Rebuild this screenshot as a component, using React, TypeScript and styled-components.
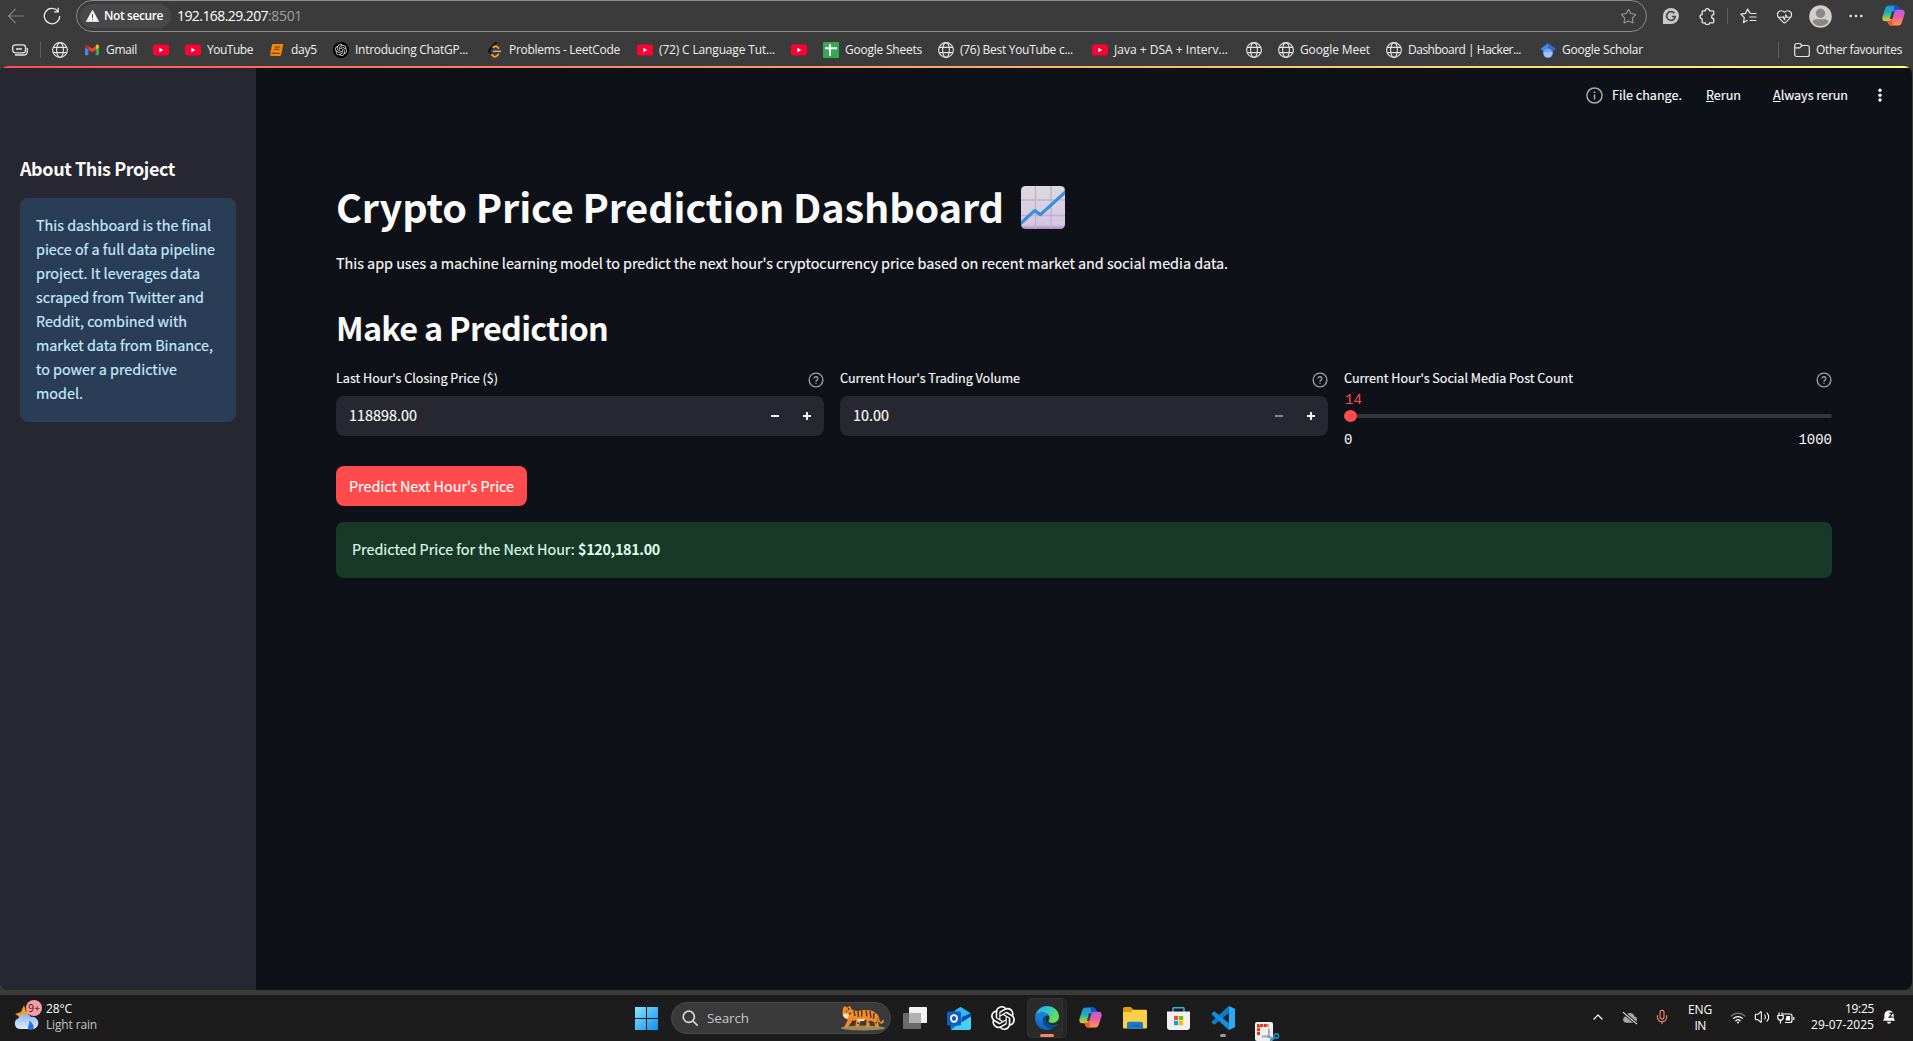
import React, { useLayoutEffect, useRef, useState } from "react";
import styled, { createGlobalStyle, css } from "styled-components";
import { Star, HeartPulse, Mic, Volume2, ChevronUp } from "lucide-react";
import { SiOpenai } from "react-icons/si";

const Global = createGlobalStyle`
  * { box-sizing: border-box; }
  html, body { margin: 0; background: #3b3b3b; overflow: hidden; }
  svg { display: block; flex: none; }
`;

const SYSTEM = `"Open Sans", "Noto Sans", sans-serif`;
const SOURCE = `"Noto Sans CJK JP", "Noto Sans CJK SC", sans-serif`;
const CODE = `"Liberation Mono", "DejaVu Sans Mono", monospace`;

const Page = styled.div`
  width: 1913px;
  height: 1041px;
  display: flex;
  flex-direction: column;
  background: #3b3b3b;
  overflow: hidden;
`;

const FitBox = styled.span<{ $w: number; $pad: number }>`
  display: block;
  flex: none;
  width: ${(p) => p.$w}px;
  margin-right: ${(p) => p.$pad}px;
  white-space: pre;
`;

/* Keeps a label at a given width by tracking its letters. */
function Fit({ w, pad = 0, children }: { w: number; pad?: number; children: React.ReactNode }) {
  const ref = useRef<HTMLSpanElement>(null);
  const [spacing, setSpacing] = useState(0);
  useLayoutEffect(() => {
    const el = ref.current;
    if (!el) return;
    const natural = el.getBoundingClientRect().width;
    const count = (el.textContent || "").length;
    if (count > 1) setSpacing((w - natural) / count);
  }, [w]);
  return (
    <FitBox $w={w} $pad={pad}>
      <span ref={ref} style={{ letterSpacing: `${spacing}px` }}>{children}</span>
    </FitBox>
  );
}

/* ---------- browser chrome ---------- */

const Toolbar = styled.header`
  height: 32px;
  flex: none;
  display: flex;
  align-items: flex-start;
  padding-left: 7px;
  color: #e8e8e8;
  font-family: ${SYSTEM};
`;

const Slot = styled.div<{ $w: number; $h?: number; $ml?: number; $mt?: number; $color?: string }>`
  flex: none;
  width: ${(p) => p.$w}px;
  height: ${(p) => p.$h ?? p.$w}px;
  margin-left: ${(p) => p.$ml ?? 0}px;
  margin-top: ${(p) => p.$mt ?? 0}px;
  color: ${(p) => p.$color ?? "inherit"};
`;

const AddressBar = styled.div`
  flex: none;
  width: 1571px;
  height: 32px;
  margin-left: 15px;
  border: 1px solid #8c8c8c;
  border-radius: 16px;
  display: flex;
  align-items: center;
  padding: 0 9px 0 3px;
`;

const Chip = styled.div`
  width: 91px;
  height: 24px;
  border-radius: 12px;
  background: #484848;
  display: flex;
  align-items: center;
  padding-left: 6px;
  gap: 5px;
  color: #fff;
  font-size: 12px;
  font-weight: 600;
  line-height: 24px;
`;

const Url = styled.div`
  display: flex;
  flex: 1;
  margin-left: 6px;
  font-size: 14px;
  line-height: 28px;
  color: #fff;
`;

const Port = styled.span`
  color: #a0a0a0;
`;

const Rule = styled.i<{ $ml: number; $h: number; $mt?: number }>`
  flex: none;
  width: 1px;
  height: ${(p) => p.$h}px;
  margin-left: ${(p) => p.$ml}px;
  margin-top: ${(p) => p.$mt ?? 0}px;
  background: #5f5f5f;
`;

const Bookmarks = styled.nav`
  height: 34px;
  flex: none;
  display: flex;
  align-items: center;
  padding: 2px 0 0 12px;
  color: #f0f0f0;
  font-family: ${SYSTEM};
  font-size: 12px;
  line-height: 16px;
`;

const BookmarkList = styled.div`
  display: flex;
  align-items: center;
  gap: 16px;
  margin-left: 11px;
  flex: 1;
`;

const Bookmark = styled.a`
  display: flex;
  align-items: center;
  gap: 6px;
  flex: none;
`;

/* ---------- streamlit app ---------- */

const Viewport = styled.div`
  height: 924px;
  width: 1912px;
  flex: none;
  display: flex;
  flex-direction: column;
  border-radius: 8px;
  overflow: hidden;
  background: #0e1117;
`;

const Decoration = styled.div`
  height: 2px;
  flex: none;
  background: linear-gradient(90deg, #ff4b4b, #ff5b50 5%, #fffd80);
`;

const Body = styled.div`
  flex: 1;
  display: flex;
  font-family: ${SOURCE};
  color: #fafafa;
  -webkit-text-stroke-width: 0.15px;
`;

const Sidebar = styled.aside`
  width: 256px;
  flex: none;
  background: #262730;
  padding: 88px 20px 0;
`;

const SideTitle = styled.h2`
  margin: 0;
  font-size: 18px;
  line-height: 24px;
  font-weight: 700;
  -webkit-text-stroke-width: 0;
`;

const InfoBox = styled.div`
  margin-top: 18px;
  height: 224px;
  border-radius: 8px;
  padding: 15px 16px;
  background: #2a3d57;
  color: #c7ebff;
  font-size: 14.4px;
  line-height: 24px;
`;

const Main = styled.main`
  flex: 1;
  display: flex;
  flex-direction: column;
`;

const AppHeader = styled.div`
  height: 56px;
  flex: none;
  display: flex;
  align-items: center;
  justify-content: flex-end;
  padding: 0 29px 2px 0;
  font-size: 12.6px;
  line-height: 20px;
`;

const HeaderText = styled.div<{ $ml: number }>`
  margin-left: ${(p) => p.$ml}px;
`;

const Content = styled.section`
  padding: 54px 80px 0;
  display: flex;
  flex-direction: column;
`;

const Title = styled.h1`
  margin: 0;
  display: flex;
  align-items: center;
  gap: 17px;
  height: 60px;
  font-size: 39.6px;
  line-height: 60px;
  font-weight: 700;
  -webkit-text-stroke-width: 0;
`;

const TitleText = styled.div`
  height: 60px;
  line-height: 55px;
`;

const Lead = styled.p`
  margin: 13px 0 0;
  font-size: 14.4px;
  line-height: 24px;
`;

const SubTitle = styled.h2`
  margin: 30px 0 0;
  font-size: 32.4px;
  line-height: 44px;
  height: 44px;
  font-weight: 700;
  -webkit-text-stroke-width: 0;
`;

const Columns = styled.div`
  margin-top: 18px;
  height: 96px;
  display: grid;
  grid-template-columns: repeat(3, 488px);
  gap: 16px;
`;

const LabelRow = styled.div`
  height: 29px;
  display: flex;
  justify-content: space-between;
  align-items: flex-start;
  font-size: 12.6px;
  line-height: 21px;
`;

const HelpMark = styled.div`
  padding-top: 5px;
  color: #a3a4a8;
`;

const NumberField = styled.div`
  height: 40px;
  border-radius: 8px;
  background: #262730;
  display: flex;
  align-items: center;
  padding: 0 1px 0 13px;
  font-size: 14.4px;
  line-height: 37px;
`;

const FieldValue = styled.div`
  flex: 1;
  height: 40px;
`;

const Step = styled.div<{ $dim?: boolean }>`
  width: 32px;
  display: flex;
  justify-content: center;
  color: ${(p) => (p.$dim ? "#84858b" : "#fafafa")};
`;

const Slider = styled.div`
  height: 67px;
  display: flex;
  flex-direction: column;
  font-family: ${CODE};
  font-size: 14px;
  -webkit-text-stroke-width: 0;
`;

const SliderValue = styled.div`
  height: 14px;
  margin-left: 1px;
  line-height: 9px;
  color: #ff4b4b;
`;

const Track = styled.div`
  height: 12px;
  display: flex;
  align-items: center;
`;

const Thumb = styled.i`
  width: 13px;
  height: 12px;
  border-radius: 50%;
  background: #ff4b4b;
`;

const Rail = styled.i`
  flex: 1;
  height: 4px;
  border-radius: 0 2px 2px 0;
  background: #333641;
`;

const Bounds = styled.div`
  margin-top: 8px;
  line-height: 20px;
  display: flex;
  justify-content: space-between;
`;

const Predict = styled.button`
  margin: 3px 0 0;
  width: 191px;
  height: 40px;
  border: 0;
  border-radius: 8px;
  background: #ff4b4b;
  color: #fff;
  font-family: ${SOURCE};
  font-size: 14.4px;
  line-height: 38px;
  padding: 0 13px 1px;
  text-align: left;
  -webkit-text-stroke-width: 0.15px;
`;

const Success = styled.div`
  margin-top: 16px;
  height: 56px;
  border-radius: 8px;
  padding: 0 16px;
  background: #183828;
  color: #dffde9;
  display: flex;
  font-size: 14.4px;
  line-height: 54px;
  b {
    font-weight: 700;
    -webkit-text-stroke-width: 0;
  }
`;

/* ---------- taskbar ---------- */

const Taskbar = styled.footer`
  margin-top: 5px;
  height: 46px;
  flex: none;
  display: flex;
  align-items: flex-start;
  background: #1c1c1c;
  color: #fff;
  font-family: ${SYSTEM};
  font-size: 12px;
  line-height: 16px;
`;

const WeatherIcon = styled.div`
  position: relative;
  width: 28px;
  height: 30px;
  margin: 5px 0 0 14px;
`;

const Badge = styled.span`
  position: absolute;
  left: 12px;
  top: 0;
  width: 16px;
  height: 16px;
  border-radius: 8px;
  background: #ff99a4;
  color: #1c1c1c;
  font-size: 10.5px;
  text-align: center;
`;

const Stack = styled.div<{ $w: number; $ml: number; $mt?: number; $align?: string }>`
  width: ${(p) => p.$w}px;
  flex: none;
  margin-left: ${(p) => p.$ml}px;
  margin-top: ${(p) => p.$mt ?? 7}px;
  display: flex;
  flex-direction: column;
  align-items: ${(p) => p.$align ?? "flex-start"};
`;

const Muted = styled.div`
  color: #c4c4c4;
`;

const SearchBox = styled.div`
  flex: none;
  width: 220px;
  height: 32px;
  margin: 7px 0 0 13px;
  border-radius: 16px;
  border: 1px solid #4a4a4a;
  background: #3a3a3a;
  display: flex;
  align-items: center;
  padding: 0 5px 1px 10px;
  gap: 9px;
  font-size: 13.5px;
  color: #c8c8c8;
`;

const Grow = styled.div`
  flex: 1;
`;

const tile = css`
  border: 1px solid #323232;
  border-radius: 5px;
  background: #2b2b2b;
`;

const ActiveTile = styled.div`
  ${tile}
  flex: none;
  width: 40px;
  height: 40px;
  margin: 3px 0 0 12px;
  background: #242424;
`;

const ActiveFace = styled.div`
  ${tile}
  width: 36px;
  height: 40px;
  margin: -1px 0 0 -1px;
  display: flex;
  flex-direction: column;
  align-items: center;
  justify-content: space-between;
  padding: 7px 0 0 4px;
`;

const Indicator = styled.i<{ $w: number; $c: string }>`
  width: ${(p) => p.$w}px;
  height: 3px;
  border-radius: 2px;
  background: ${(p) => p.$c};
`;

const RunningApp = styled.div`
  flex: none;
  width: 24px;
  height: 31px;
  margin: 11px 0 0 21px;
  display: flex;
  flex-direction: column;
  align-items: center;
  justify-content: space-between;
`;

/* ---------- drawings ---------- */

const Globe = () => (
  <svg width="16" height="16" viewBox="0 0 16 16" fill="none" stroke="#e6e6e6" strokeWidth="1.1">
    <circle cx="8" cy="8" r="7.4" />
    <ellipse cx="8" cy="8" rx="3.4" ry="7.4" />
    <path d="M1.2 5.4h13.6M1.2 10.6h13.6" />
  </svg>
);

const YouTube = () => (
  <svg width="16" height="16" viewBox="0 0 16 16">
    <rect y="2.4" width="16" height="11.2" rx="2.4" fill="#ff0033" />
    <path d="M6.3 5.7v4.6l4-2.3z" fill="#fff" />
  </svg>
);

const Gmail = () => (
  <svg width="16" height="16" viewBox="0 0 16 16">
    <path d="M1 4.5v7.8c0 .6.4 1 1 1h2.4V6.8z" fill="#4285f4" />
    <path d="M15 4.5v7.8c0 .6-.4 1-1 1h-2.4V6.8z" fill="#34a853" />
    <path d="M11.6 4.2v3.6L15 5.2V4c0-1.5-1.6-2-2.6-1.3z" fill="#fbbc04" />
    <path d="M4.4 7.8V3.9L8 6.6l3.6-2.7v3.9L8 10.5z" fill="#ea4335" />
    <path d="M1 4v1.2l3.4 2.6V3.9l-.8-.6C2.5 2.3 1 2.7 1 4z" fill="#c5221f" />
  </svg>
);

const Book = () => (
  <svg width="16" height="16" viewBox="0 0 16 16">
    <path d="M4.3 2h8.8c.9 0 1.2.5 1 1.2l-2 9.5c-.2.9-.7 1.3-1.6 1.3H2.6c-1.2 0-1.8-.7-1.5-1.9L3 3.1C3.2 2.4 3.5 2 4.3 2z" fill="#fb8500" />
    <path d="M5.7 5h5.2M5.2 7.3h5.2M2.4 11.3h8.3" stroke="#3b3b3b" strokeWidth="1" />
  </svg>
);

const Leet = () => (
  <svg width="16" height="16" viewBox="0 0 16 16" fill="none" strokeWidth="1.9">
    <path d="M9 .8 2.8 7.5c-.9 1-.9 2.200 0 3.100l1.700 1.800" stroke="#0c0c0c" strokeLinecap="round" />
    <path d="M6.300 5.200c1.400-1.200 3-1.200 4.200 0l1 1M4.800 12.700l1.200 1.200c1.100 1.100 2.700 1.100 3.800 0l1.600-1.500" stroke="#ffa116" strokeLinecap="round" />
    <path d="M6 9.300h8" stroke="#b3b3b3" strokeWidth="1.5" />
  </svg>
);

const Sheets = () => (
  <svg width="16" height="16" viewBox="0 0 16 16">
    <rect width="16" height="16" rx="1" fill="#34a853" />
    <path d="M2 6.3h12M7 2.2v11.6" stroke="#fff" strokeWidth="2" />
  </svg>
);

const Scholar = () => (
  <svg width="16" height="16" viewBox="0 0 16 16">
    <circle cx="8" cy="11" r="4.8" fill="#a0c3ff" />
    <path d="M8 1 .5 6.900 4 9.500h8l3.500-2.600z" fill="#4285f4" />
    <path d="m8 1 7.500 5.900L12 9.500 8 6z" fill="#356ac3" />
    <path d="M3.700 9.200a4.800 4.800 0 0 1 8.600 0z" fill="#76a7fa" />
  </svg>
);

const OpenAiBadge = styled.span`
  width: 16px;
  height: 16px;
  border-radius: 8px;
  background: #000;
  color: #ddd;
  display: grid;
  place-items: center;
`;

const Question = () => (
  <svg width="16" height="16" viewBox="0 0 24 24" fill="none" stroke="currentColor" strokeWidth="2" strokeLinecap="round">
    <circle cx="12" cy="12" r="10.3" />
    <path d="M9.1 9a3 3 0 0 1 5.8 1c0 2-2.900 2.500-2.900 4M12 17.200v.1" />
  </svg>
);

const ChartEmoji = () => (
  <svg width="44" height="44" viewBox="0 0 44 44">
    <defs>
      <linearGradient id="paper" x1="0" y1="0" x2="0" y2="1">
        <stop offset="0" stopColor="#dcd9e0" />
        <stop offset=".9" stopColor="#d6c6e4" />
        <stop offset="1" stopColor="#ad8cc4" />
      </linearGradient>
      <clipPath id="sheet"><rect width="44" height="43" rx="4.5" /></clipPath>
    </defs>
    <g clipPath="url(#sheet)">
      <rect width="44" height="43" fill="url(#paper)" />
      <path d="M14.500 0v43M30 0v43M0 14h44M0 29.500h44" stroke="#bdb4c6" strokeWidth="1.3" />
      <path d="M-1 38 13.600 24.600 19.500 28.600 45 5.500" fill="none" stroke="#3390dc" strokeWidth="3.2" strokeLinejoin="round" />
    </g>
  </svg>
);

const Copilot = ({ size }: { size: number }) => (
  <svg width={size} height={size} viewBox="0 0 24 24">
    <defs>
      <linearGradient id="cpA" x1="0" y1="0" x2="0" y2="1">
        <stop offset="0" stopColor="#1b8ae8" />
        <stop offset=".5" stopColor="#21b6b0" />
        <stop offset="1" stopColor="#f2c821" />
      </linearGradient>
      <linearGradient id="cpB" x1="0" y1="0" x2="0" y2="1">
        <stop offset="0" stopColor="#b05cf2" />
        <stop offset=".5" stopColor="#ef5f98" />
        <stop offset="1" stopColor="#ff9b4a" />
      </linearGradient>
    </defs>
    <path d="M7.500 1.500h7.200c1.700 0 2.400 1 2.900 2.600l.8 2.400h-2.200c-1.500 0-2.200.8-2.700 2.300l-2 6.400c-.6 2-1.500 2.700-3.200 2.700H3.500C.8 17.900-.2 16 .6 13L3.300 4.700C4 2.500 5.200 1.500 7.500 1.500z" fill="url(#cpA)" />
    <path d="M12.500 1.500h2.200c1.700 0 2.400 1 2.900 2.600l.8 2.400h-2.200c-1.500 0-2.200.8-2.700 2.300l-.5 1.500z" fill="#1650c8" />
    <path d="M16.500 22.500H9.300c-1.700 0-2.400-1-2.900-2.600L5.600 17.500h2.200c1.500 0 2.200-.8 2.700-2.300l2-6.400c.6-2 1.500-2.700 3.200-2.700h4.800c2.700 0 3.700 1.900 2.900 4.900l-2.700 8.300c-.7 2.200-1.900 3.200-4.200 3.200z" fill="url(#cpB)" />
    <path d="M11.500 22.500H9.300c-1.700 0-2.400-1-2.900-2.600L5.600 17.500h2.200c1.500 0 2.200-.8 2.700-2.300z" fill="#f0592e" />
    <path d="M10.400 7.500h2.700l-2.300 8.200H8.200z" fill="#3b3b3b" />
  </svg>
);

const Edge = () => (
  <svg width="24" height="24" viewBox="0 0 24 24">
    <defs>
      <linearGradient id="edA" x1="0" y1="0" x2="1" y2=".5">
        <stop offset="0" stopColor="#2aa6e8" />
        <stop offset=".5" stopColor="#2cc3d2" />
        <stop offset="1" stopColor="#6be04f" />
      </linearGradient>
      <linearGradient id="edB" x1="0" y1="0" x2="0" y2="1">
        <stop offset="0" stopColor="#1a86dc" />
        <stop offset="1" stopColor="#0f62b8" />
      </linearGradient>
    </defs>
    <path d="M.2 10.500C1 4.300 6 0 12 0c7 0 12 5 12 10.600 0 4-3 6.300-6.500 6.300-2.600 0-4-.9-4-1.700 0-.7 1-1.200 1-3.200C14.500 8.800 11 6.500 7.500 6.500c-3.300 0-6 1.500-7.300 4z" fill="url(#edA)" />
    <path d="M.2 10.500C1.300 8 4.300 6.500 7.500 6.500c3 0 5 1.500 5.800 3C9.500 9.300 8 12 8 14.500c0 5 5 9 10.500 7-2 1.600-4.300 2.500-6.500 2.500C5 24-.7 18 .2 10.500z" fill="url(#edB)" />
    <path d="M8 14.500c0-2.400 1.400-4.700 3.500-5-.3 1-.8 1.500-.8 3.200 0 4 4 6.500 8 6.300 1.400-.1 2.500-.5 3.500-1 .4-.2.700.1.500.500-1 1.600-2.400 2.600-4.200 3C13 23.500 8 19.500 8 14.500z" fill="#0c4a94" />
  </svg>
);

const Tiger = () => (
  <svg width="45" height="26" viewBox="0 0 45 26">
    <ellipse cx="23" cy="23" rx="22" ry="2.5" fill="#998c5c" />
    <path d="M36 9c3 2 1.500 7 4.500 8.500 2 .8 3-.8 2-2.500" fill="none" stroke="#e8892a" strokeWidth="1.8" />
    <path d="M3 3l2-2 2 1.500L10 1l1.500 3C14 6.500 17 6 21 5.500c5-.8 11-.5 14 2 3 3 1.500 6 3 9l1 5.500h-3.500L34 17l-4-1.500-.5 6.500H26l.5-7-6 .5-1.500 6.500h-3.500l.5-7-4 1.500-4.500 6H4l4-8C5 14.500 2.500 12 2.500 8z" fill="#f08c2c" />
    <path d="M3 9c1.500-1 4-.5 6 .5l-1 4C5 13 3 12 3 9zM17 14l8 0-1 2-6 .3z" fill="#fbe3c0" />
    <path d="M14 6l1 5M18 6l.5 6M22 5.500l-.5 6M26 5.500l1 6M30 6l1 7M34 8l-.5 6M9 3l-1 2M11 8l-2 1M12 16l2 1M28 17h2M35 18l2-.5M6 6.500h1M17 18l2 .5" stroke="#3b2313" strokeWidth="1.2" />
  </svg>
);

const marks: { icon: React.ReactNode; text?: string; w?: number; pad?: number }[] = [
  { icon: <Globe /> },
  { icon: <Gmail />, text: "Gmail", w: 31 },
  { icon: <YouTube /> },
  { icon: <YouTube />, text: "YouTube", w: 46 },
  { icon: <Book />, text: "day5", w: 26 },
  { icon: <OpenAiBadge><SiOpenai size={12} /></OpenAiBadge>, text: "Introducing ChatGP...", w: 113, pad: 3 },
  { icon: <Leet />, text: "Problems - LeetCode", w: 111, pad: 1 },
  { icon: <YouTube />, text: "(72) C Language Tut...", w: 116 },
  { icon: <YouTube /> },
  { icon: <Sheets />, text: "Google Sheets", w: 77 },
  { icon: <Globe />, text: "(76) Best YouTube c...", w: 113, pad: 3 },
  { icon: <YouTube />, text: "Java + DSA + Interv...", w: 114, pad: 2 },
  { icon: <Globe /> },
  { icon: <Globe />, text: "Google Meet", w: 70 },
  { icon: <Globe />, text: "Dashboard | Hacker...", w: 113, pad: 3 },
  { icon: <Scholar />, text: "Google Scholar", w: 81 },
];

const about: [string, number][] = [
  ["This dashboard is the final", 175],
  ["piece of a full data pipeline", 179],
  ["project. It leverages data", 164],
  ["scraped from Twitter and", 168],
  ["Reddit, combined with", 151],
  ["market data from Binance,", 177],
  ["to power a predictive", 141],
  ["model.", 47],
];

function NumberInput({ label, w, value, vw, dim }: { label: string; w: number; value: string; vw: number; dim?: boolean }) {
  return (
    <div>
      <LabelRow>
        <Fit w={w}>{label}</Fit>
        <HelpMark><Question /></HelpMark>
      </LabelRow>
      <NumberField>
        <FieldValue><Fit w={vw}>{value}</Fit></FieldValue>
        <Step $dim={dim}><svg width="8" height="8"><path d="M0 4h8" stroke="currentColor" strokeWidth="2" /></svg></Step>
        <Step><svg width="8" height="8"><path d="M0 4h8M4 0v8" stroke="currentColor" strokeWidth="2" /></svg></Step>
      </NumberField>
    </div>
  );
}

export default function App() {
  return (
    <Page>
      <Global />
      <Toolbar>
        <Slot $w={18} $mt={7} $color="#808080">
          <svg width="18" height="18" viewBox="0 0 18 18" fill="none" stroke="currentColor" strokeWidth="1.2"><path d="M17 9H1.500M8.500 2 1.500 9l7 7" /></svg>
        </Slot>
        <Slot $w={18} $ml={18} $mt={7}>
          <svg width="18" height="18" viewBox="0 0 18 18" fill="none" stroke="currentColor" strokeWidth="1.3"><path d="M16.700 9A7.700 7.700 0 1 1 14.800 4M15.200.8v4h-4.200" /></svg>
        </Slot>
        <AddressBar>
          <Chip>
            <svg width="13" height="12" viewBox="0 0 13 12"><path d="M6.500.3 12.700 11.500H.3z" fill="#fff" stroke="#fff" strokeWidth=".6" strokeLinejoin="round" /><path d="M6.500 4.200v3.500M6.500 8.800v1.200" stroke="#484848" strokeWidth="1.2" /></svg>
            <Fit w={59}>Not secure</Fit>
          </Chip>
          <Url><Fit w={91}>192.168.29.207</Fit><Port><Fit w={34}>:8501</Fit></Port></Url>
          <Slot $w={17} $color="#9a9a9a"><Star size={17} strokeWidth={1.5} /></Slot>
        </AddressBar>
        <Slot $w={16} $ml={16} $mt={8}>
          <svg width="16" height="16" viewBox="0 0 16 16"><path d="M8 0a8 8 0 1 1 0 16H0V8a8 8 0 0 1 8-8z" fill="#c8c8c8" /><path d="M11.300 5.300A4.300 4.300 0 1 0 12.200 8.500H8.800" fill="none" stroke="#444" strokeWidth="1.7" /></svg>
        </Slot>
        <Slot $w={17} $ml={20} $mt={8}>
          <svg width="17" height="17" viewBox="0 0 17 17" fill="none" stroke="currentColor" strokeWidth="1.3" strokeLinejoin="round"><path d="M4 2.800h2.300a2.100 2.100 0 0 1 4.200 0h3.300c.5 0 .9.4.9.9v3a2 2 0 0 0 0 4v3.200c0 .5-.4.900-.9.900h-3.300a2.100 2.100 0 0 1-4.200 0H4a.9.9 0 0 1-.9-.9v-3a2.100 2.100 0 0 1 0-4.200v-3c0-.5.400-.9.900-.9z" /></svg>
        </Slot>
        <Rule $ml={11} $h={16} $mt={8} />
        <Slot $w={17} $h={16} $ml={12} $mt={8}>
          <svg width="17" height="16" viewBox="0 0 17 16" fill="none" stroke="currentColor" strokeWidth="1.2" strokeLinejoin="round"><path d="M10 5.400 7.600 1 5.600 5.400.8 6.100l3.500 3.500-.8 5 4.100-2.300M10.300 5.500H16.500M9.500 9H16.500M9.500 12.500H16.500" /></svg>
        </Slot>
        <Slot $w={17} $ml={19} $mt={8}><HeartPulse size={17} strokeWidth={1.6} /></Slot>
        <Slot $w={23} $ml={16} $mt={5}>
          <svg width="23" height="23" viewBox="0 0 23 23"><circle cx="11.5" cy="11.5" r="11.3" fill="#d1cecb" /><circle cx="11.5" cy="8.3" r="4.7" fill="#8b8883" /><path d="M3.500 17c.6-2 1.800-2.800 3.400-2.800h9.200c1.600 0 2.800.8 3.400 2.800-1.900 2.700-4.900 4.100-8 4.100s-6.100-1.400-8-4.100z" fill="#8b8883" /></svg>
        </Slot>
        <Slot $w={14} $h={4} $ml={17} $mt={14}>
          <svg width="14" height="4"><g fill="currentColor"><circle cx="1.7" cy="2" r="1.3" /><circle cx="7" cy="2" r="1.3" /><circle cx="12.3" cy="2" r="1.3" /></g></svg>
        </Slot>
        <Slot $w={23} $ml={19} $mt={4}><Copilot size={23} /></Slot>
      </Toolbar>
      <Bookmarks>
        <svg width="16" height="12" viewBox="0 0 16 12" fill="none" stroke="#e6e6e6" strokeWidth="1.3"><rect x=".7" y=".8" width="12.8" height="8" rx="2.5" /><path d="M4 5h6M3 11h8.500c2.300 0 3.800-1.300 3.800-3.500V4" /></svg>
        <Rule $ml={12} $h={16} />
        <BookmarkList>
          {marks.map((m, i) => (
            <Bookmark key={i}>{m.icon}{m.text && <Fit w={m.w!} pad={m.pad}>{m.text}</Fit>}</Bookmark>
          ))}
        </BookmarkList>
        <Rule $ml={0} $h={16} />
        <Slot $w={16} $ml={15}>
          <svg width="16" height="16" viewBox="0 0 16 16" fill="none" stroke="#e6e6e6" strokeWidth="1.2"><path d="M.7 12.500v-9a2 2 0 0 1 2-2h3.500l1.800 2h5.300a2 2 0 0 1 2 2v7a2 2 0 0 1-2 2H2.700a2 2 0 0 1-2-2zM.7 5.800h5L8 3.500" /></svg>
        </Slot>
        <Slot $w={97} $h={16} $ml={6}><Fit w={86}>Other favourites</Fit></Slot>
      </Bookmarks>

      <Viewport>
        <Decoration />
        <Body>
          <Sidebar>
            <SideTitle><Fit w={155}>About This Project</Fit></SideTitle>
            <InfoBox>{about.map(([t, w]) => <Fit key={t} w={w}>{t}</Fit>)}</InfoBox>
          </Sidebar>
          <Main>
            <AppHeader>
              <svg width="17" height="17" viewBox="0 0 17 17" fill="none" stroke="#a8a9ad" strokeWidth="1.5"><circle cx="8.5" cy="8.5" r="7.6" /><path d="M8.500 7.500v5M8.500 4.300v1.600" /></svg>
              <HeaderText $ml={9}><Fit w={70} pad={1}>File change.</Fit></HeaderText>
              <HeaderText $ml={23}><Fit w={35} pad={1}><u>R</u>erun</Fit></HeaderText>
              <HeaderText $ml={31}><Fit w={75} pad={1}><u>A</u>lways rerun</Fit></HeaderText>
              <Slot $w={6} $h={14} $ml={28}>
                <svg width="6" height="14"><g fill="#fafafa"><circle cx="3" cy="2.3" r="1.7" /><circle cx="3" cy="7.2" r="1.7" /><circle cx="3" cy="12" r="1.7" /></g></svg>
              </Slot>
            </AppHeader>
            <Content>
              <Title><TitleText><Fit w={668}>Crypto Price Prediction Dashboard</Fit></TitleText><ChartEmoji /></Title>
              <Lead><Fit w={892}>This app uses a machine learning model to predict the next hour's cryptocurrency price based on recent market and social media data.</Fit></Lead>
              <SubTitle><Fit w={272}>Make a Prediction</Fit></SubTitle>
              <Columns>
                <NumberInput label="Last Hour's Closing Price ($)" w={162} value="118898.00" vw={68} />
                <NumberInput label="Current Hour's Trading Volume" w={180} value="10.00" vw={36} dim />
                <div>
                  <LabelRow>
                    <Fit w={229}>Current Hour's Social Media Post Count</Fit>
                    <HelpMark><Question /></HelpMark>
                  </LabelRow>
                  <Slider>
                    <SliderValue>14</SliderValue>
                    <Track><Thumb /><Rail /></Track>
                    <Bounds><span>0</span><span>1000</span></Bounds>
                  </Slider>
                </div>
              </Columns>
              <Predict><Fit w={165}>Predict Next Hour's Price</Fit></Predict>
              <Success><Fit w={226}>Predicted Price for the Next Hour: </Fit><b><Fit w={82}>$120,181.00</Fit></b></Success>
            </Content>
          </Main>
        </Body>
      </Viewport>

      <Taskbar>
        <WeatherIcon>
          <svg width="28" height="30" viewBox="0 0 28 30">
            <defs><linearGradient id="cloud" x1="0" y1="0" x2="0" y2="1"><stop offset="0" stopColor="#8db4f5" /><stop offset="1" stopColor="#e2ebfb" /></linearGradient></defs>
            <path d="M10 5l2 6 6 2-10 4-3 2-.5-3L1 14l6-2z" fill="#f7a11b" />
            <path d="M6 29a5.500 5.500 0 0 1-1.400-10.700A7 7 0 0 1 17 17a6 6 0 0 1 2.500 12z" fill="url(#cloud)" />
            <path d="M15.500 20.500c3 3 4.200 5 4.200 6.700a2.800 2.800 0 0 1-5.600 0c0-1.500 1.400-3 1.400-6.700z" fill="#1677f2" />
          </svg>
          <Badge>9+</Badge>
        </WeatherIcon>
        <Stack $w={60} $ml={4} $mt={6}>
          <Fit w={26}>28°C</Fit>
          <Muted><Fit w={51}>Light rain</Fit></Muted>
        </Stack>
        <Slot $w={23} $ml={529} $mt={12}>
          <svg width="23" height="23" viewBox="0 0 23 23">
            <defs><linearGradient id="win" x1="0" y1="0" x2="1" y2="1"><stop offset="0" stopColor="#8ce4fb" /><stop offset="1" stopColor="#0b8ef5" /></linearGradient></defs>
            <path d="M0 0h11v11H0zM12 0h11v11H12zM0 12h11v11H0zM12 12h11v11H12z" fill="url(#win)" />
          </svg>
        </Slot>
        <SearchBox>
          <svg width="16" height="16" viewBox="0 0 16 16" fill="none" stroke="#d6d6d6" strokeWidth="1.7"><circle cx="6.8" cy="6.8" r="5.6" /><path d="m11 11 4.200 4.200" strokeLinecap="round" /></svg>
          <Fit w={42}>Search</Fit>
          <Grow />
          <Tiger />
        </SearchBox>
        <Slot $w={24} $ml={12} $mt={12}>
          <svg width="24" height="22" viewBox="0 0 24 22"><rect x="6" width="18" height="16" rx="1" fill="#f2f2f2" /><rect y="6" width="18" height="16" rx="1" fill="#6a6a6a" /><path d="M6 6h12v10H6z" fill="#b0b0b0" /></svg>
        </Slot>
        <Slot $w={24} $ml={20} $mt={12}>
          <svg width="24" height="23" viewBox="0 0 24 23">
            <path d="M3 6.500 13.500 0 24 6.500v14a2.500 2.500 0 0 1-2.500 2.500H4z" fill="#1a78d6" />
            <path d="M24 8v12.500a2.500 2.500 0 0 1-2.500 2.500H4z" fill="#47d1f7" />
            <path d="M8 3.500 13.500 0 24 6.500 15 12z" fill="#35b5f1" /><path d="M15 10l9-4v3.500L15 15z" fill="#0a4aa8" />
            <rect y="4.5" width="14" height="14" rx="1.5" fill="#0f5fc0" /><ellipse cx="7" cy="11.5" rx="3" ry="3.3" fill="none" stroke="#fff" strokeWidth="1.7" />
          </svg>
        </Slot>
        <Slot $w={24} $ml={20} $mt={11}><SiOpenai size={24} /></Slot>
        <ActiveTile><ActiveFace><Edge /><Indicator $w={14} $c="#f4846c" /></ActiveFace></ActiveTile>
        <Slot $w={23} $ml={12} $mt={11}><Copilot size={23} /></Slot>
        <Slot $w={24} $ml={21} $mt={12}>
          <svg width="24" height="22" viewBox="0 0 24 22">
            <path d="M0 2C0 .8.700 0 1.800 0h6l2.500 2.500V6H0z" fill="#e19c0c" />
            <path d="M0 5h8l2.300-2.300H22.500c1 0 1.500.5 1.500 1.500V20c0 1-.5 1.600-1.500 1.600h-21C.5 21.600 0 21 0 20z" fill="#ffcf48" />
            <path d="M4 21.600V17c0-1.500.8-2.300 2.200-2.300h11.600c1.400 0 2.200.8 2.200 2.300v4.600z" fill="#147bd1" /><path d="M8 18.500h8" stroke="#0c5da5" strokeWidth="1.2" />
          </svg>
        </Slot>
        <Slot $w={23} $ml={20} $mt={12}>
          <svg width="23" height="23" viewBox="0 0 23 23">
            <path d="M6 5V1.500c0-.5.300-.8.800-.8h9.400c.5 0 .8.300.8.800V5" fill="none" stroke="#2cb3e8" strokeWidth="1.5" />
            <path d="M0 4.500h23V20a3 3 0 0 1-3 3H3a3 3 0 0 1-3-3z" fill="#f0f0f0" />
            <path d="M7 9h4.200v4.200H7z" fill="#f25022" /><path d="M12 9h4.200v4.200H12z" fill="#7fba00" /><path d="M7 14h4.200v4.200H7z" fill="#00a4ef" /><path d="M12 14h4.200v4.200H12z" fill="#ffb900" />
          </svg>
        </Slot>
        <RunningApp>
          <svg width="24" height="24" viewBox="0 0 24 24">
            <path d="M17.800 0v7L4 18.200c-.5.400-1 .4-1.500 0L1 16.800c-.6-.5-.6-1 0-1.500z" fill="#0b7dc9" />
            <path d="M17.800 24v-7L4 5.800c-.5-.4-1-.4-1.500 0L1 7.200c-.6.5-.6 1 0 1.500z" fill="#1290df" />
            <path d="M17.800 0 24 2.700v18.600L17.800 24z" fill="#2aaaf4" />
          </svg>
          <Indicator $w={6} $c="#9a9a9a" />
        </RunningApp>
        <Slot $w={25} $h={19} $ml={20} $mt={27}>
          <svg width="25" height="19" viewBox="0 0 25 19">
            <rect width="18" height="19" rx="2" fill="#efefef" /><path d="M3.500 13V3.500h10" fill="none" stroke="#d83b14" strokeWidth="3" strokeDasharray="3 .7" />
            <path d="M7 14.500h7V6.500" fill="none" stroke="#a8adb5" strokeWidth="2" /><path d="M12 14l7 3" stroke="#8d99a5" strokeWidth="2" /><circle cx="21.3" cy="14" r="2.2" fill="none" stroke="#1d87c9" strokeWidth="1.8" /><path d="M15 18.500l5-3" stroke="#1d87c9" strokeWidth="1.5" />
          </svg>
        </Slot>
        <Grow />
        <Slot $w={16} $mt={14}><ChevronUp size={16} strokeWidth={1.8} /></Slot>
        <Slot $w={16} $ml={16} $mt={15}>
          <svg width="16" height="16" viewBox="0 0 16 16"><path d="M4 12.700a3.300 3.300 0 0 1-.3-6.500 4.600 4.600 0 0 1 8.800.2 3.200 3.200 0 0 1-.2 6.300z" fill="#a6a6a6" /><path d="M1 2.200l14 12" stroke="#1c1c1c" strokeWidth="3" /><path d="M1 2.200l14 12" stroke="#e6e6e6" strokeWidth="1.1" /></svg>
        </Slot>
        <Slot $w={16} $ml={16} $mt={14} $color="#e8896c"><Mic size={16} strokeWidth={1.7} /></Slot>
        <Stack $w={24} $ml={18} $mt={7} $align="center"><Fit w={24}>ENG</Fit><Fit w={11}>IN</Fit></Stack>
        <Slot $w={16} $ml={18} $mt={14}>
          <svg width="16" height="16" viewBox="0 0 16 16" fill="none" strokeWidth="1.3" strokeLinecap="round"><path d="M1.200 7a9.600 9.600 0 0 1 13.600 0" stroke="#7a7a7a" /><path d="M3.600 9.400a6.200 6.200 0 0 1 8.800 0M5.900 11.700a3 3 0 0 1 4.200 0" stroke="#fff" /><circle cx="8" cy="13.5" r="1" fill="#fff" /></svg>
        </Slot>
        <Slot $w={16} $ml={8} $mt={14}><Volume2 size={16} strokeWidth={1.6} /></Slot>
        <Slot $w={18} $h={16} $ml={7} $mt={15}>
          <svg width="18" height="16" viewBox="0 0 18 16" fill="none" stroke="#fff" strokeWidth="1.2"><path d="M5.500 4H13a2 2 0 0 1 2 2v4.500a2 2 0 0 1-2 2H8M16.800 7v3" /><path d="M9.500 6H13v4.500H8.500z" fill="#fff" stroke="none" /><path d="M2 2.500v3M5 2.500v3M.8 5.500h5.400v2a2.700 2.700 0 0 1-5.400 0zM3.500 10v3.500" /></svg>
        </Slot>
        <Stack $w={63} $ml={16} $mt={6} $align="flex-end"><Fit w={29}>19:25</Fit><Fit w={63}>29-07-2025</Fit></Stack>
        <Slot $w={16} $ml={8} $mt={14}>
          <svg width="16" height="16" viewBox="0 0 16 16"><path d="M7 1.500a4.600 4.600 0 0 1 4.600 4.600v3l1.400 2.700H1l1.400-2.700v-3A4.600 4.600 0 0 1 7 1.500zM5 12.800h4a2 2 0 0 1-4 0z" fill="#fff" /><path d="M7.200 4.200h3.400l-3.400 4h3.600" fill="none" stroke="#1c1c1c" strokeWidth="1.200" /></svg>
        </Slot>
        <Slot $w={15} />
      </Taskbar>
    </Page>
  );
}
